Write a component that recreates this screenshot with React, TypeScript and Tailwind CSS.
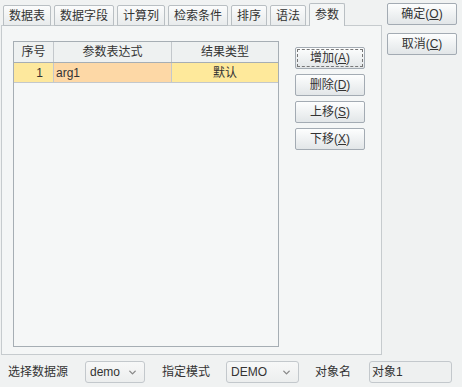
import { ChevronDown } from "lucide-react";

const font = { fontFamily: '"Liberation Sans", "Noto Sans CJK SC", sans-serif' };

const tabs = ["数据表", "数据字段", "计算列", "检索条件", "排序", "语法", "参数"];

function Btn({ label, k, focus }: { label: string; k: string; focus?: boolean }) {
  return (
    <button
      className={
        "flex h-[22px] w-[70px] items-center justify-center rounded-[2px] border border-[#a3abb3] bg-gradient-to-b from-[#fdfefe] to-[#e2e6e8] text-[12px] text-[#333] " +
        (focus ? "outline-1 outline-dashed outline-[#777] -outline-offset-3" : "")
      }
    >
      {label}(<span className="underline">{k}</span>)
    </button>
  );
}

function Select({ value, w }: { value: string; w: string }) {
  return (
    <div
      className={
        "flex h-[22px] items-center justify-between rounded-[3px] border border-[#c3c8cc] bg-gradient-to-b from-[#f7f8f8] to-[#eceeee] pl-[4px] pr-[6px] text-[12px] text-[#333] " +
        w
      }
    >
      <span>{value}</span>
      <ChevronDown size={11} strokeWidth={3} className="text-[#888]" />
    </div>
  );
}

export default function App() {
  return (
    <div style={font} className="relative h-[387px] w-[462px] overflow-hidden bg-[#f0f2f2] text-[12px] text-[#333]">
      <div className="flex">
        <div className="ml-[1px] w-[381px]">
          <div className="flex items-end gap-[3px] pl-[2px] pt-[3px]">
            {tabs.map((t, i) => {
              const sel = i === tabs.length - 1;
              return (
                <div
                  key={t}
                  className={
                    "flex items-center justify-center rounded-t-[2px] border border-[#b9bfc3] px-[5px] " +
                    (sel
                      ? "relative z-10 h-[23px] border-b-0 bg-[#f4f6f6]"
                      : "h-[21px] bg-gradient-to-b from-[#fbfcfc] to-[#e8ebec]")
                  }
                >
                  {t}
                </div>
              );
            })}
          </div>
          <div className="-mt-px flex h-[330px] gap-[16px] border border-[#c6cbce] bg-[#f4f6f6] pl-[11px] pt-[15px] pb-[7px]">
            <div className="flex h-full w-[266px] flex-col border border-[#a6aeb4] bg-[#f5f7f7]">
              <div className="grid h-[21px] grid-cols-[40px_118px_1fr] border-b border-[#a6aeb4] bg-[#eef1f1]">
                <div className="flex items-center justify-center border-r border-[#c3c8cc]">序号</div>
                <div className="flex items-center justify-center border-r border-[#c3c8cc]">参数表达式</div>
                <div className="flex items-center justify-center">结果类型</div>
              </div>
              <div className="grid h-[20px] grid-cols-[40px_118px_1fr] border-b border-[#c3c8cc]">
                <div className="flex items-center justify-end border-r border-[#c3c8cc] bg-[#fde89d] pr-[10px]">1</div>
                <div className="flex items-center border-r border-[#c3c8cc] bg-[#fdd8a6] pl-[2px]">arg1</div>
                <div className="flex items-center justify-center bg-[#fee99b]">默认</div>
              </div>
            </div>
            <div className="flex flex-col gap-[5px] pt-[6px]">
              <Btn label="增加" k="A" focus />
              <Btn label="删除" k="D" />
              <Btn label="上移" k="S" />
              <Btn label="下移" k="X" />
            </div>
          </div>
        </div>
        <div className="ml-[5px] flex flex-col gap-[8px] pt-[3px]">
          <Btn label="确定" k="O" />
          <Btn label="取消" k="C" />
        </div>
      </div>
      <div className="mt-[5px] flex h-[24px] items-center pl-[8px]">
        <span className="w-[77px]">选择数据源</span>
        <Select value="demo" w="w-[60px]" />
        <span className="ml-[17px] w-[64px]">指定模式</span>
        <Select value="DEMO" w="w-[73px]" />
        <span className="ml-[16px] w-[54px]">对象名</span>
        <div className="flex h-[22px] w-[83px] items-center rounded-[3px] border border-[#c3c8cc] bg-[#eef0f0] pl-[2px]">对象1</div>
      </div>
    </div>
  );
}
